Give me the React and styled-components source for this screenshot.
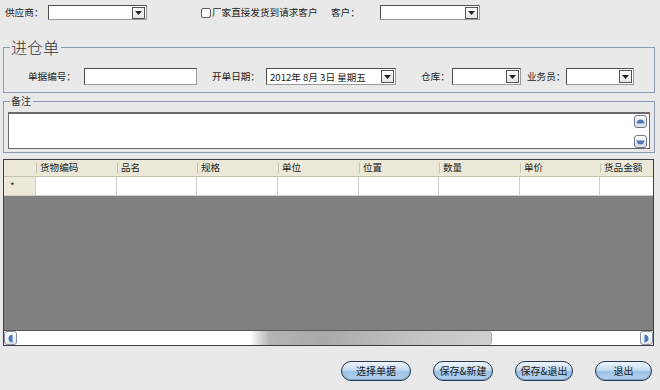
import React from 'react';
import styled, { createGlobalStyle } from 'styled-components';

const GlobalStyle = createGlobalStyle`
  body {
    margin: 0;
    background: #e9e9e9;
    font-family: "Noto Sans CJK SC", "Noto Sans", sans-serif;
  }
`;

const Page = styled.div`
  width: 660px;
  height: 390px;
  background: #e9e9e9;
  overflow: hidden;
  display: flex;
  flex-direction: column;
  font-size: 9.6px;
  color: #222;
`;

const TopRow = styled.div`
  display: flex;
  align-items: center;
  height: 15px;
  padding: 5px 0 0 5px;
`;

const Label = styled.span`
  width: ${p => p.$w}px;
  margin-left: ${p => p.$ml || 0}px;
  flex-shrink: 0;
  white-space: nowrap;
  line-height: 15px;
`;

const Combo = styled.div`
  width: ${p => p.$w}px;
  height: ${p => p.$h || 17}px;
  margin-left: ${p => p.$ml || 0}px;
  box-sizing: border-box;
  flex-shrink: 0;
  background: #fff;
  border: 1px solid #4e4e4e;
  border-right-color: #9a9a9a;
  border-bottom-color: #9a9a9a;
  display: flex;
  align-items: center;
  justify-content: space-between;
  padding-left: 3px;
  white-space: nowrap;
`;

const DropBtn = styled.span`
  width: 13px;
  height: ${p => p.$h || 13}px;
  box-sizing: border-box;
  margin-right: 1px;
  border: 1px solid #555;
  background: linear-gradient(#ffffff, #e4e4e4);
  display: flex;
  align-items: center;
  justify-content: center;
`;

const Input = styled.div`
  width: ${p => p.$w}px;
  height: 17px;
  box-sizing: border-box;
  flex-shrink: 0;
  background: #fff;
  border: 1px solid #4e4e4e;
  border-right-color: #9a9a9a;
  border-bottom-color: #9a9a9a;
`;

const Check = styled.span`
  width: 10px;
  height: 10px;
  box-sizing: border-box;
  margin-left: 54px;
  margin-right: 1px;
  border: 1px solid #5c5c5c;
  border-radius: 2px;
  background: #fff;
  flex-shrink: 0;
`;

const Group = styled.fieldset`
  margin: ${p => p.$mt}px 5px 0 3px;
  padding: 0 4px;
  padding-top: ${p => p.$pt}px;
  height: ${p => p.$h}px;
  box-sizing: border-box;
  border: 1px solid #8d98ae;
  min-inline-size: 0;
`;

const Legend = styled.legend`
  padding: 0 2px 0 1px;
  margin-left: 2px;
  font-size: ${p => p.$size}px;
  line-height: ${p => p.$lh}px;
  color: #333;
  font-weight: ${p => (p.$size > 12 ? 300 : 400)};
`;

const FormRow = styled.div`
  display: flex;
  align-items: center;
  padding-left: 20px;
`;

const Memo = styled.div`
  height: 37px;
  box-sizing: border-box;
  background: #fff;
  border: 1px solid #6a6a6a;
  border-top-width: 2px;
  display: flex;
  justify-content: flex-end;
`;

const MemoScroll = styled.div`
  display: flex;
  flex-direction: column;
  justify-content: space-between;
  padding: 1px 2px 0 0;
`;

const RoundBtn = styled.span`
  width: 13px;
  height: 13px;
  box-sizing: border-box;
  border: 1px solid #6f7a8c;
  border-radius: 3px;
  background: linear-gradient(#fbfbfb, #d9dde4);
  display: flex;
  align-items: center;
  justify-content: center;
`;

const Grid = styled.div`
  margin: 6px 6px 0 3px;
  height: 187px;
  box-sizing: border-box;
  border: 1px solid #3d3d3d;
  display: flex;
  flex-direction: column;
  overflow: hidden;
`;

const Cols = styled.div`
  display: grid;
  grid-template-columns: 32px 81px 80px 81px 81px 80px 81px 80px 80px;
  width: 650px;
  overflow: hidden;
`;

const HeadCell = styled.div`
  position: relative;
  height: 16px;
  line-height: 15px;
  padding-left: 4px;
  background: #ece9d8;
  border-bottom: 1px solid #c5c2b2;
  white-space: nowrap;
  &::before {
    content: '';
    position: absolute;
    left: 0;
    top: 3px;
    height: 10px;
    border-left: 1px solid #c7c4b2;
    display: ${p => (p.$first ? 'none' : 'block')};
  }
`;

const Cell = styled.div`
  height: 18px;
  background: ${p => (p.$head ? '#ece9d8' : '#fff')};
  border-right: 1px solid #d2d0c6;
  border-bottom: 1px solid #d2d0c6;
  font-size: 10px;
  line-height: 18px;
  padding-left: 6px;
  color: #333;
`;

const Empty = styled.div`
  flex: 1;
  background: #808080;
`;

const HScroll = styled.div`
  height: 14px;
  display: flex;
  align-items: stretch;
  background: #fff;
  border-top: 1px solid #555;
`;

const ScrollBtn = styled.span`
  width: 13px;
  box-sizing: border-box;
  border: 1px solid #8a93a3;
  border-radius: 3px;
  background: linear-gradient(#ffffff, #dfe3ea);
  display: flex;
  align-items: center;
  justify-content: center;
  flex-shrink: 0;
`;

const Track = styled.div`
  flex: 1;
  display: flex;
  padding-left: 233px;
  padding-right: 148px;
`;

const Thumb = styled.div`
  flex: 1;
  border-radius: 0 4px 4px 0;
  border-right: 1px solid #a8a8a8;
  background: linear-gradient(90deg, #ffffff 0%, #b4b4b4 8%, #a9a9a9 30%, #c4c4c4 70%, #cfcfcf 100%);
`;

const Buttons = styled.div`
  display: flex;
  justify-content: flex-end;
  gap: 22px;
  margin-top: 15px;
  padding-right: 8px;
`;

const Pill = styled.button`
  width: ${p => p.$w}px;
  height: 20px;
  padding: 0;
  box-sizing: border-box;
  border: 1px solid #27384f;
  border-radius: 10px;
  background: linear-gradient(#eef5fc 0%, #c4dbf1 45%, #9dc2e6 55%, #b6d5f2 100%);
  box-shadow: inset 0 -1px 1px rgba(40, 70, 110, 0.35);
  font-family: "Noto Sans CJK SC", "Noto Sans", sans-serif;
  font-size: 10px;
  color: #1b1b1b;
  line-height: 18px;
`;

const Arrow = () => (
  <svg width="7" height="4" viewBox="0 0 7 4">
    <path d="M0 0H7L3.5 4Z" fill="#222" />
  </svg>
);

const Dome = ({ down }) => (
  <svg width="9" height="6" viewBox="0 0 9 6">
    <path
      d={down ? 'M0.5 1.5H8.5Q8 5.5 4.5 5.5Q1 5.5 0.5 1.5Z' : 'M0.5 4.5H8.5Q8 0.5 4.5 0.5Q1 0.5 0.5 4.5Z'}
      fill="#4a78b8"
    />
  </svg>
);

const Side = ({ right }) => (
  <svg width="5" height="9" viewBox="0 0 5 9">
    <path
      d={right ? 'M0.5 0.5V8.5Q4.5 8 4.5 4.5Q4.5 1 0.5 0.5Z' : 'M4.5 0.5V8.5Q0.5 8 0.5 4.5Q0.5 1 4.5 0.5Z'}
      fill="#4a78b8"
    />
  </svg>
);

const DropCombo = ({ w, h, ml, text, bh }) => (
  <Combo $w={w} $h={h} $ml={ml}>
    <span>{text}</span>
    <DropBtn $h={bh}>
      <Arrow />
    </DropBtn>
  </Combo>
);

const headers = ['货物编码', '品名', '规格', '单位', '位置', '数量', '单价', '货品金额'];

export default function App() {
  return (
    <Page>
      <GlobalStyle />
      <TopRow>
        <Label $w={43}>供应商：</Label>
        <DropCombo w={99} h={15} bh={12} />
        <Check />
        <Label $w={106}>厂家直接发货到请求客户</Label>
        <Label $w={49} $ml={13}>客户：</Label>
        <DropCombo w={100} h={15} bh={12} />
      </TopRow>

      <Group $mt={18} $pt={12} $h={55}>
        <Legend $size={16} $lh={18}>进仓单</Legend>
        <FormRow>
          <Label $w={56}>单据编号：</Label>
          <Input $w={113} />
          <Label $w={54} $ml={15}>开单日期：</Label>
          <DropCombo w={130} text="2012年  8月  3日  星期五" />
          <Label $w={31} $ml={25}>仓库：</Label>
          <DropCombo w={69} />
          <Label $w={39} $ml={6}>业务员：</Label>
          <DropCombo w={68} />
        </FormRow>
      </Group>

      <Group $mt={2} $pt={5} $h={58}>
        <Legend $size={10} $lh={12}>备注</Legend>
        <Memo>
          <MemoScroll>
            <RoundBtn>
              <Dome />
            </RoundBtn>
            <RoundBtn>
              <Dome down />
            </RoundBtn>
          </MemoScroll>
        </Memo>
      </Group>

      <Grid>
        <Cols>
          <HeadCell $first />
          {headers.map(h => (
            <HeadCell key={h}>{h}</HeadCell>
          ))}
          <Cell $head>*</Cell>
          {headers.map(h => (
            <Cell key={h} />
          ))}
        </Cols>
        <Empty />
        <HScroll>
          <ScrollBtn>
            <Side />
          </ScrollBtn>
          <Track>
            <Thumb />
          </Track>
          <ScrollBtn>
            <Side right />
          </ScrollBtn>
        </HScroll>
      </Grid>

      <Buttons>
        <Pill $w={70}>选择单据</Pill>
        <Pill $w={60}>保存&新建</Pill>
        <Pill $w={58}>保存&退出</Pill>
        <Pill $w={57}>退出</Pill>
      </Buttons>
    </Page>
  );
}
